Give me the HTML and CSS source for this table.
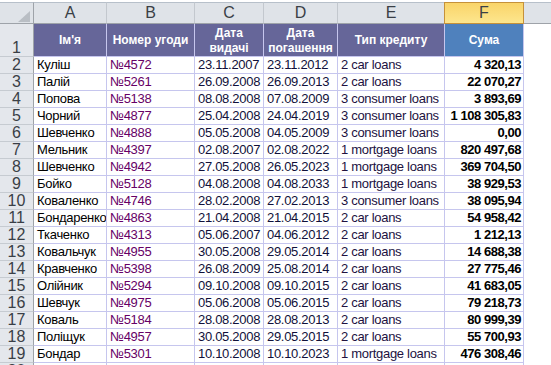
FILE: index.html
```html
<!DOCTYPE html>
<html>
<head>
<meta charset="utf-8">
<link rel="stylesheet" href="styles.css">
</head>
<body>
<div class="sheet">
  <div class="colhead corner"><span class="tri"></span></div>
  <div class="colhead">A</div>
  <div class="colhead">B</div>
  <div class="colhead">C</div>
  <div class="colhead">D</div>
  <div class="colhead">E</div>
  <div class="colhead sel">F</div>
  <div class="colhead last"></div>

  <div class="rh rh1">1</div>
  <div class="th">Ім'я</div>
  <div class="th">Номер угоди</div>
  <div class="th">Дата<br>видачі</div>
  <div class="th">Дата<br>погашення</div>
  <div class="th">Тип кредиту</div>
  <div class="th blue">Сума</div>
  <div class="g"></div>

  <div class="rh">2</div><div class="c">Куліш</div><div class="c b">№4572</div><div class="c d">23.11.2007</div><div class="c d">23.11.2012</div><div class="c e">2 car loans</div><div class="c n">4 320,13</div><div class="g"></div>
  <div class="rh">3</div><div class="c">Палій</div><div class="c b">№5261</div><div class="c d">26.09.2008</div><div class="c d">26.09.2013</div><div class="c e">2 car loans</div><div class="c n">22 070,27</div><div class="g"></div>
  <div class="rh">4</div><div class="c">Попова</div><div class="c b">№5138</div><div class="c d">08.08.2008</div><div class="c d">07.08.2009</div><div class="c e">3 consumer loans</div><div class="c n">3 893,69</div><div class="g"></div>
  <div class="rh">5</div><div class="c">Чорний</div><div class="c b">№4877</div><div class="c d">25.04.2008</div><div class="c d">24.04.2019</div><div class="c e">3 consumer loans</div><div class="c n">1 108 305,83</div><div class="g"></div>
  <div class="rh">6</div><div class="c">Шевченко</div><div class="c b">№4888</div><div class="c d">05.05.2008</div><div class="c d">04.05.2009</div><div class="c e">3 consumer loans</div><div class="c n">0,00</div><div class="g"></div>
  <div class="rh">7</div><div class="c">Мельник</div><div class="c b">№4397</div><div class="c d">02.08.2007</div><div class="c d">02.08.2022</div><div class="c e">1 mortgage loans</div><div class="c n">820 497,68</div><div class="g"></div>
  <div class="rh">8</div><div class="c">Шевченко</div><div class="c b">№4942</div><div class="c d">27.05.2008</div><div class="c d">26.05.2023</div><div class="c e">1 mortgage loans</div><div class="c n">369 704,50</div><div class="g"></div>
  <div class="rh">9</div><div class="c">Бойко</div><div class="c b">№5128</div><div class="c d">04.08.2008</div><div class="c d">04.08.2033</div><div class="c e">1 mortgage loans</div><div class="c n">38 929,53</div><div class="g"></div>
  <div class="rh">10</div><div class="c">Коваленко</div><div class="c b">№4746</div><div class="c d">28.02.2008</div><div class="c d">27.02.2013</div><div class="c e">3 consumer loans</div><div class="c n">38 095,94</div><div class="g"></div>
  <div class="rh">11</div><div class="c">Бондаренко</div><div class="c b">№4863</div><div class="c d">21.04.2008</div><div class="c d">21.04.2015</div><div class="c e">2 car loans</div><div class="c n">54 958,42</div><div class="g"></div>
  <div class="rh">12</div><div class="c">Ткаченко</div><div class="c b">№4313</div><div class="c d">05.06.2007</div><div class="c d">04.06.2012</div><div class="c e">2 car loans</div><div class="c n">1 212,13</div><div class="g"></div>
  <div class="rh">13</div><div class="c">Ковальчук</div><div class="c b">№4955</div><div class="c d">30.05.2008</div><div class="c d">29.05.2014</div><div class="c e">2 car loans</div><div class="c n">14 688,38</div><div class="g"></div>
  <div class="rh">14</div><div class="c">Кравченко</div><div class="c b">№5398</div><div class="c d">26.08.2009</div><div class="c d">25.08.2014</div><div class="c e">2 car loans</div><div class="c n">27 775,46</div><div class="g"></div>
  <div class="rh">15</div><div class="c">Олійник</div><div class="c b">№5294</div><div class="c d">09.10.2008</div><div class="c d">09.10.2015</div><div class="c e">2 car loans</div><div class="c n">41 683,05</div><div class="g"></div>
  <div class="rh">16</div><div class="c">Шевчук</div><div class="c b">№4975</div><div class="c d">05.06.2008</div><div class="c d">05.06.2015</div><div class="c e">2 car loans</div><div class="c n">79 218,73</div><div class="g"></div>
  <div class="rh">17</div><div class="c">Коваль</div><div class="c b">№5184</div><div class="c d">28.08.2008</div><div class="c d">28.08.2013</div><div class="c e">2 car loans</div><div class="c n">80 999,39</div><div class="g"></div>
  <div class="rh">18</div><div class="c">Поліщук</div><div class="c b">№4957</div><div class="c d">30.05.2008</div><div class="c d">29.05.2015</div><div class="c e">2 car loans</div><div class="c n">55 700,93</div><div class="g"></div>
  <div class="rh">19</div><div class="c">Бондар</div><div class="c b">№5301</div><div class="c d">10.10.2008</div><div class="c d">10.10.2023</div><div class="c e">1 mortgage loans</div><div class="c n">476 308,46</div><div class="g"></div>
  <div class="rh">20</div><div class="c"></div><div class="c"></div><div class="c"></div><div class="c"></div><div class="c"></div><div class="c"></div><div class="g"></div>
</div>
</body>
</html>
```
FILE: styles.css
```css
html, body {
  margin: 0;
  padding: 0;
  background: #ffffff;
  overflow: hidden;
}
body {
  padding-top: 2px;
  width: 551px;
  height: 365px;
  box-sizing: border-box;
  font-family: "Liberation Sans", Arial, sans-serif;
}
.sheet {
  display: grid;
  grid-template-columns: 34px 73px 88px 69px 74px 107px 79px 1fr;
  grid-template-rows: 22px 33px repeat(19, 17px);
}
.sheet > div {
  box-sizing: border-box;
  overflow: hidden;
  white-space: nowrap;
}
.colhead {
  background: #dfe3e8;
  border-top: 1px solid #b7c0ca;
  border-right: 1px solid #c3c8ce;
  border-bottom: 1px solid #9ea3a9;
  font-size: 16px;
  line-height: 20px;
  color: #3a3f46;
  text-align: center;
}
.colhead.corner {
  border-right: 1px solid #9ea3a9;
  display: flex;
  justify-content: flex-end;
  align-items: flex-end;
  padding: 0 3px 1px 0;
}
.tri {
  display: block;
  width: 12px;
  height: 11px;
  background: #b9bec4;
  clip-path: polygon(100% 0, 100% 100%, 0 100%);
}
.colhead.sel {
  background: linear-gradient(#f9d469, #fde68e);
  border-right: 1px solid #c5913a;
  border-bottom: 1px solid #c5913a;
  border-top: 1px solid #c5913a;
  box-shadow: -1px 0 0 #c5913a;
}
.colhead.last {
  border-right: none;
}
.rh {
  background: #e4e7ec;
  border-right: 1px solid #9ea3a9;
  border-bottom: 1px solid #c6cbd1;
  font-size: 16px;
  line-height: 16px;
  color: #3a3f46;
  text-align: center;
}
.rh1 {
  display: flex;
  align-items: flex-end;
  justify-content: center;
  padding-bottom: 0;
}
.th {
  background: #666699;
  color: #ffffff;
  font-weight: bold;
  font-size: 12px;
  line-height: 15px;
  border-right: 1px solid #c6c6ee;
  border-bottom: 1px solid #c6c6ee;
  display: flex;
  align-items: center;
  justify-content: center;
  text-align: center;
  padding-top: 1px;
}
.th.blue {
  background: #4f81bd;
}
.c {
  font-size: 13px;
  line-height: 16px;
  letter-spacing: -0.3px;
  color: #000000;
  border-right: 1px solid #c6c6ee;
  border-bottom: 1px solid #c6c6ee;
  padding-left: 3px;
}
.c.b {
  color: #660066;
}
.c.d {
  color: #10103a;
}
.c.e {
  color: #22123f;
}
.c.n {
  font-weight: bold;
  letter-spacing: -0.45px;
  text-align: right;
  padding-left: 0;
  padding-right: 2px;
}
.g {
  background: #ffffff;
}
```
